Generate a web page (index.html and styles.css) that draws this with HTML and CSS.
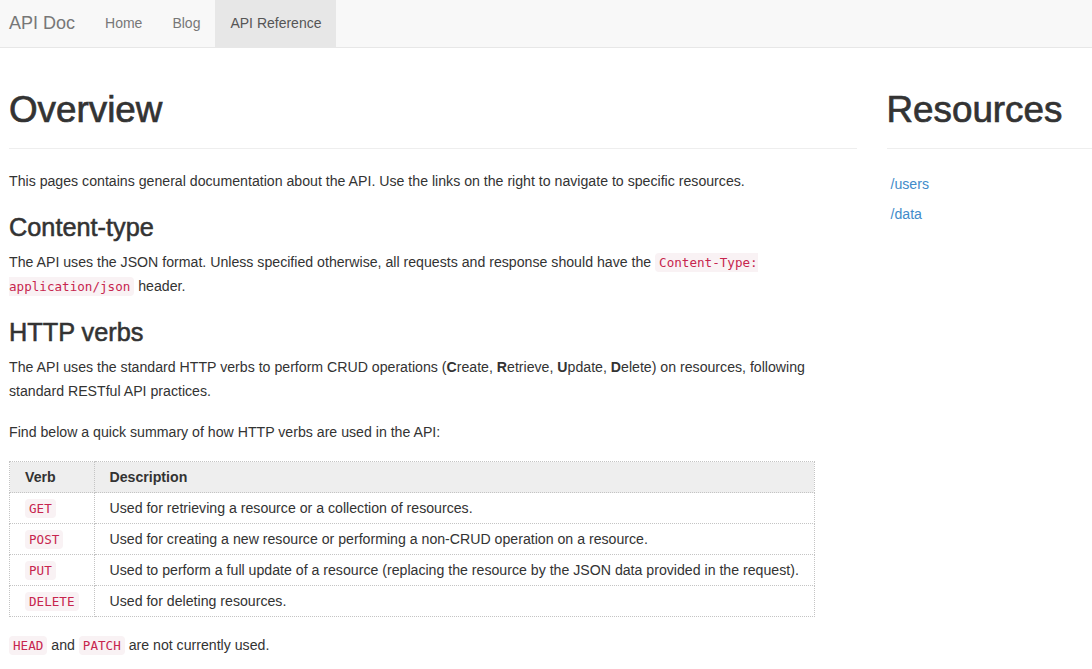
FILE: index.html
```html
<!DOCTYPE html>
<html lang="en">
<head>
<meta charset="utf-8">
<title>API Doc</title>
<link rel="stylesheet" href="styles.css">
</head>
<body>
<nav class="navbar">
  <a class="brand" href="#">API Doc</a>
  <a class="nav-link" href="#">Home</a>
  <a class="nav-link" href="#">Blog</a>
  <a class="nav-link active" href="#">API Reference</a>
</nav>
<div class="main">
  <div class="content">
    <h1 class="page-header">Overview</h1>
    <p>This pages contains general documentation about the API. Use the links on the right to navigate to specific resources.</p>
    <h3>Content-type</h3>
    <p>The API uses the JSON format. Unless specified otherwise, all requests and response should have the <code>Content-Type: application/json</code> header.</p>
    <h3>HTTP verbs</h3>
    <p>The API uses the standard HTTP verbs to perform CRUD operations (<b>C</b>reate, <b>R</b>etrieve, <b>U</b>pdate, <b>D</b>elete) on resources, following standard RESTful API practices.</p>
    <p>Find below a quick summary of how HTTP verbs are used in the API:</p>
    <table class="verbs">
      <thead>
        <tr><th>Verb</th><th>Description</th></tr>
      </thead>
      <tbody>
        <tr><td><code>GET</code></td><td>Used for retrieving a resource or a collection of resources.</td></tr>
        <tr><td><code>POST</code></td><td>Used for creating a new resource or performing a non-CRUD operation on a resource.</td></tr>
        <tr><td><code>PUT</code></td><td>Used to perform a full update of a resource (replacing the resource by the JSON data provided in the request).</td></tr>
        <tr><td><code>DELETE</code></td><td>Used for deleting resources.</td></tr>
      </tbody>
    </table>
    <p><code>HEAD</code> and <code>PATCH</code> are not currently used.</p>
  </div>
  <div class="sidebar">
    <h1 class="page-header">Resources</h1>
    <ul class="resources">
      <li><a href="#">/users</a></li>
      <li><a href="#">/data</a></li>
    </ul>
  </div>
</div>
</body>
</html>
```
FILE: styles.css
```css
html, body {
  margin: 0;
  padding: 0;
}
body {
  font-family: "Liberation Sans", Arial, Helvetica, sans-serif;
  font-size: 14.15px;
  color: #333;
  background: #fff;
  overflow: hidden;
}
a {
  text-decoration: none;
}
.navbar {
  display: flex;
  height: 47px;
  background: #f8f8f8;
  border-bottom: 1px solid #e7e7e7;
  padding-left: 9px;
}
.brand {
  font-size: 18px;
  line-height: 47px;
  color: #777;
  padding-right: 15px;
}
.nav-link {
  font-size: 14px;
  line-height: 47px;
  color: #777;
  padding: 0 15px;
}
.nav-link.active {
  background: #e7e7e7;
  color: #555;
}
.main {
  display: flex;
  gap: 30px;
  padding-left: 9px;
}
.content {
  flex: 0 0 847.5px;
}
.sidebar {
  flex: 0 0 262.5px;
}
.page-header {
  font-size: 36.8px;
  line-height: 40px;
  font-weight: 400;
  -webkit-text-stroke: 0.7px #333;
  margin: 42px 0 0;
  padding-bottom: 18px;
  border-bottom: 1px solid #eee;
}
.content .page-header + p {
  margin-top: 20px;
}
p {
  margin: 0 0 17px;
  line-height: 24px;
}
h3 {
  font-size: 25.3px;
  line-height: 28px;
  font-weight: 400;
  -webkit-text-stroke: 0.55px #333;
  margin: 20px 0 9px;
}
code {
  font-family: "DejaVu Sans Mono", Menlo, monospace;
  font-size: 12.6px;
  line-height: 1;
  color: #c7254e;
  background: #f9f2f4;
  padding: 2px 4px;
  border-radius: 4px;
}
.verbs {
  border-collapse: collapse;
  border: 1px dotted #c4c4c4;
  margin: 0 0 16px;
}
.verbs th,
.verbs td {
  border: 1px dotted #c4c4c4;
  padding: 5px 15px;
  line-height: 20px;
  text-align: left;
  vertical-align: top;
}
.verbs th {
  background: #eee;
  font-weight: 700;
}
.resources {
  list-style: none;
  margin: 20px 0 0;
  padding: 0 0 0 4px;
}
.resources li {
  line-height: 30px;
}
.resources a {
  color: #428bca;
}
```
